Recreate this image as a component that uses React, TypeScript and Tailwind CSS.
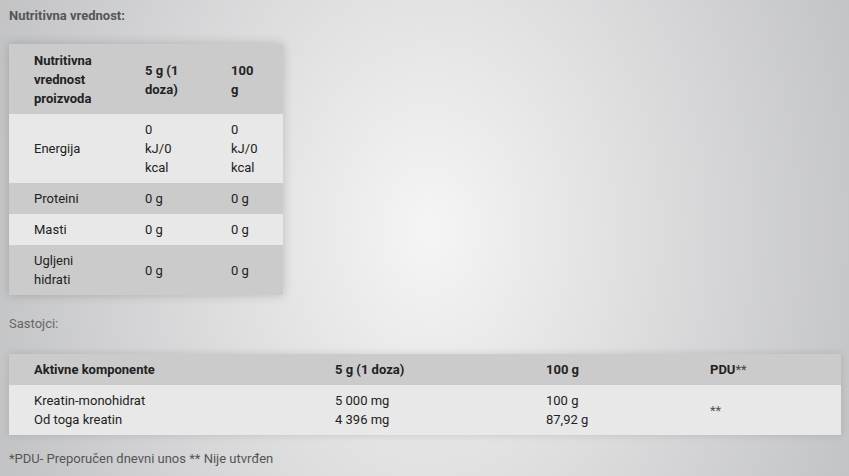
const nutrition = [
  { label: ['Energija'], a: ['0', 'kJ/0', 'kcal'], b: ['0', 'kJ/0', 'kcal'], dark: false },
  { label: ['Proteini'], a: ['0 g'], b: ['0 g'], dark: true },
  { label: ['Masti'], a: ['0 g'], b: ['0 g'], dark: false },
  { label: ['Ugljeni', 'hidrati'], a: ['0 g'], b: ['0 g'], dark: true },
];

function Lines({ lines }: { lines: string[] }) {
  return (
    <>
      {lines.map((l, i) => (
        <div key={i} className="whitespace-nowrap">{l}</div>
      ))}
    </>
  );
}

export default function App() {
  return (
    <div
      className="min-h-screen w-full pl-[9px] pt-[6px] text-[13px] leading-[19px] text-[#222] bg-[radial-gradient(ellipse_450px_600px_at_430px_230px,#f5f5f5_0%,#c3c4c6_100%)]"
      style={{ fontFamily: 'Roboto, "Liberation Sans", sans-serif' }}
    >
      <h2 className="font-bold text-[#555]">Nutritivna vrednost:</h2>

      {/* Nutrition table */}
      <table className="mt-[19px] w-[274px] table-fixed border-collapse shadow-[0_0_10px_rgba(0,0,0,0.18)]">
        <colgroup>
          <col className="w-[111px]" />
          <col className="w-[86px]" />
          <col className="w-[77px]" />
        </colgroup>
        <thead>
          <tr className="bg-[#cbcbcb] font-bold">
            <th className="pl-[25px] pt-[7px] pb-[6px] text-left align-middle">
              <Lines lines={['Nutritivna', 'vrednost', 'proizvoda']} />
            </th>
            <th className="pl-[25px] pt-[7px] pb-[6px] text-left align-middle">
              <Lines lines={['5 g (1', 'doza)']} />
            </th>
            <th className="pl-[25px] pt-[7px] pb-[6px] text-left align-middle">
              <Lines lines={['100', 'g']} />
            </th>
          </tr>
        </thead>
        <tbody>
          {nutrition.map((r, i) => (
            <tr key={i} className={r.dark ? 'bg-[#cbcbcb]' : 'bg-[#e8e8e8]'}>
              <td className="pl-[25px] py-[6px] align-middle"><Lines lines={r.label} /></td>
              <td className="pl-[25px] py-[6px] align-middle"><Lines lines={r.a} /></td>
              <td className="pl-[25px] py-[6px] align-middle"><Lines lines={r.b} /></td>
            </tr>
          ))}
        </tbody>
      </table>

      <p className="mt-[19px] text-[#666]">Sastojci:</p>

      {/* Ingredients table */}
      <table className="mt-[21px] w-[832px] table-fixed border-collapse shadow-[0_0_8px_rgba(0,0,0,0.12)]">
        <colgroup>
          <col className="w-[301px]" />
          <col className="w-[211px]" />
          <col className="w-[164px]" />
          <col className="w-[156px]" />
        </colgroup>
        <thead>
          <tr className="bg-[#cbcbcb] font-bold">
            <th className="pl-[25px] py-[6px] text-left">Aktivne komponente</th>
            <th className="pl-[25px] py-[6px] text-left">5 g (1 doza)</th>
            <th className="pl-[25px] py-[6px] text-left">100 g</th>
            <th className="pl-[25px] py-[6px] text-left">
              PDU<span className="font-normal text-[#444]">**</span>
            </th>
          </tr>
        </thead>
        <tbody>
          <tr className="bg-[#e8e8e8]">
            <td className="pl-[25px] py-[6px] align-middle">
              <Lines lines={['Kreatin-monohidrat', 'Od toga kreatin']} />
            </td>
            <td className="pl-[25px] py-[6px] align-middle">
              <Lines lines={['5 000 mg', '4 396 mg']} />
            </td>
            <td className="pl-[25px] py-[6px] align-middle">
              <Lines lines={['100 g', '87,92 g']} />
            </td>
            <td className="pl-[25px] py-[6px] align-middle text-[#555]">**</td>
          </tr>
        </tbody>
      </table>

      <p className="mt-[14px] text-[#555]">*PDU- Preporučen dnevni unos ** Nije utvrđen</p>
    </div>
  );
}
